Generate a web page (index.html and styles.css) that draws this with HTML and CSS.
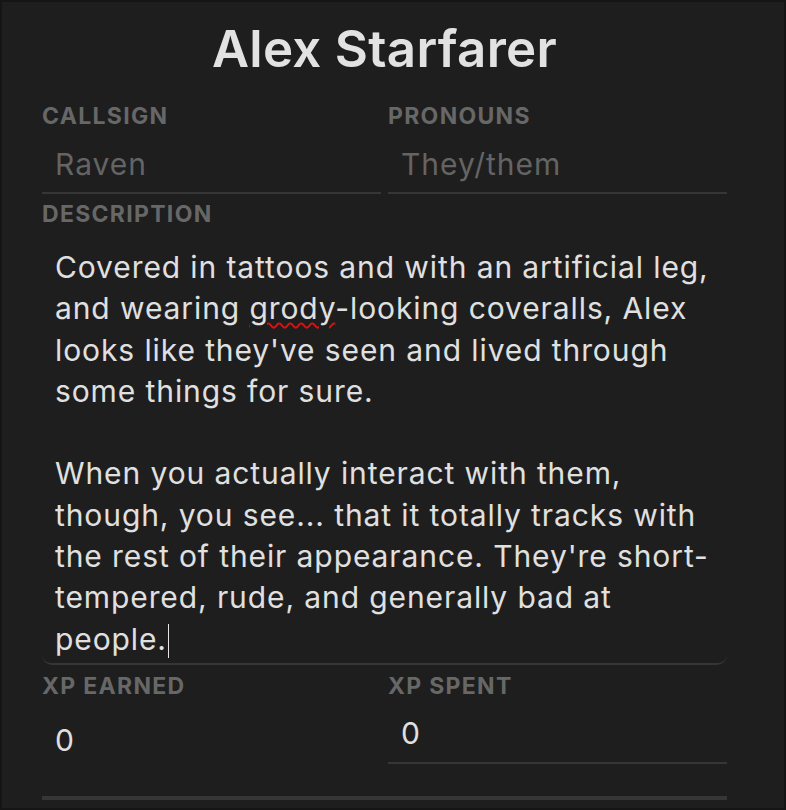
FILE: index.html
```html
<!DOCTYPE html>
<html lang="en">
<head>
<meta charset="utf-8">
<title>Alex Starfarer</title>
<link rel="stylesheet" href="styles.css">
</head>
<body>
<div class="page">
  <div class="sheet">
    <h1 class="name">Alex Starfarer</h1>
    <div class="row">
      <div class="field">
        <label class="label">Callsign</label>
        <div class="input placeholder">Raven</div>
      </div>
      <div class="field">
        <label class="label">Pronouns</label>
        <div class="input placeholder">They/them</div>
      </div>
    </div>
    <div class="field">
      <label class="label">Description</label>
      <div class="textarea"><p>Covered in tattoos and with an artificial leg, and wearing <span class="misspelt">grody</span>-looking coveralls, Alex looks like they've seen and lived through some things for sure.</p><p>When you actually interact with them, though, you see... that it totally tracks with the rest of their appearance. They're short-tempered, rude, and generally bad at people.<span class="caret"></span></p></div>
    </div>
    <div class="row">
      <div class="field">
        <label class="label">XP Earned</label>
        <div class="number">0</div>
      </div>
      <div class="field">
        <label class="label">XP Spent</label>
        <div class="input value">0</div>
      </div>
    </div>
    <div class="bar"></div>
  </div>
</div>
</body>
</html>
```

FILE: styles.css
```css
html, body {
  margin: 0;
  padding: 0;
  background: #141414;
}

.page {
  box-sizing: border-box;
  min-height: 100vh;
  border: 2px solid #151515;
  background: #1e1e1e;
  padding: 0 57px 0 40px;
  font-family: Inter, "Noto Sans", sans-serif;
  color: #dedede;
}

.sheet {
  width: 685px;
  display: flex;
  flex-direction: column;
}

.name {
  margin: 17px 0 0;
  text-align: center;
  font-size: 51px;
  font-weight: 600;
  line-height: 60px;
  letter-spacing: 0.3px;
  color: #e2e2e2;
}

.row {
  display: grid;
  grid-template-columns: 339px 339px;
  column-gap: 7px;
}

.field {
  display: flex;
  flex-direction: column;
}

.label {
  display: block;
  text-transform: uppercase;
  font-size: 23px;
  font-weight: 700;
  line-height: 28px;
  letter-spacing: 1.3px;
  color: #676767;
}

.row:first-of-type .label {
  margin-top: 23px;
}

.input {
  border-bottom: 2px solid #363636;
  padding: 16px 13px 10px;
  font-size: 30px;
  line-height: 36px;
  letter-spacing: 1px;
}

.placeholder {
  color: #646464;
}

.value {
  color: #e0e0e0;
  padding-top: 15px;
  padding-bottom: 11px;
}

.textarea {
  border-bottom: 2px solid #353535;
  border-radius: 0 0 10px 10px;
  padding: 19px 13px 3px;
  font-size: 30px;
  line-height: 41.3px;
  letter-spacing: 0.9px;
  color: #e0e0e0;
}

.textarea p {
  margin: 0 0 41.3px;
}

.textarea p:last-child {
  margin-bottom: 0;
}

.misspelt {
  text-decoration: underline wavy #e01010;
  text-decoration-thickness: 2px;
  text-underline-offset: 3px;
}

.caret {
  display: inline-block;
  width: 1.5px;
  height: 34px;
  margin-left: 1px;
  background: #e6e6e6;
  vertical-align: -8px;
}

.number {
  padding: 22px 13px 0;
  font-size: 30px;
  line-height: 36px;
  color: #e0e0e0;
}

.row + .field .label {
  margin-top: 6px;
}

.field + .row .label {
  margin-top: 7px;
}

.bar {
  margin-top: 32px;
  height: 4px;
  background: #363636;
}
```
